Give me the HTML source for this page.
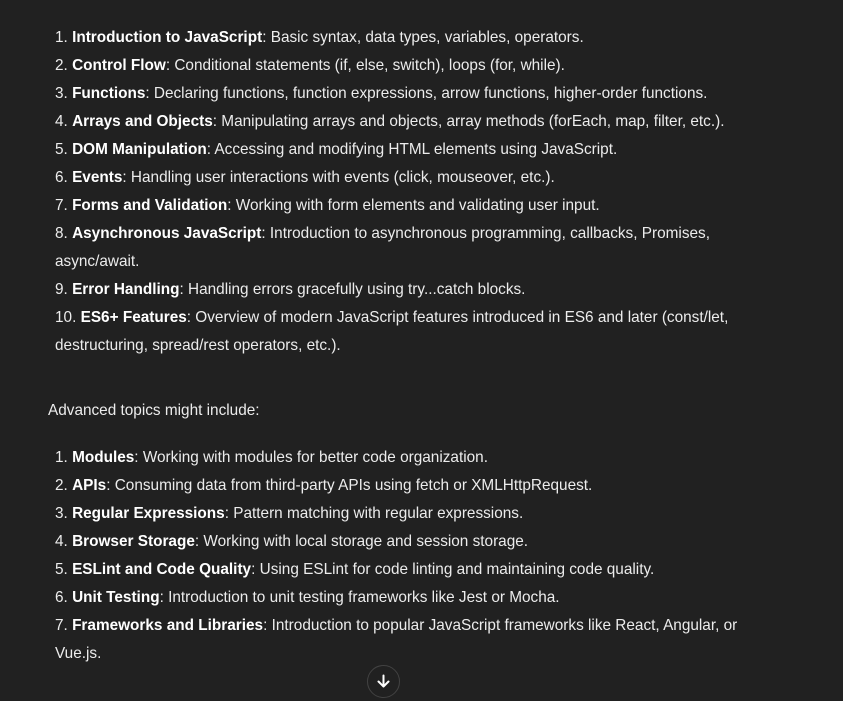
<!DOCTYPE html>
<html><head><style>
html,body{margin:0;padding:0;background:#212121;width:843px;height:701px;overflow:hidden}
body{font-family:"Liberation Sans",sans-serif;font-size:15.35px;color:#ececec;position:relative}
.l{position:absolute;left:55px;height:28px;line-height:28px;white-space:nowrap}
b{font-weight:bold;color:#fff}
.c{position:absolute;left:367px;top:665px;width:31px;height:31px;border:1px solid #424242;border-radius:50%;background:#212121}
</style></head><body>
<div class="l" style="top:24px">1. <b>Introduction to JavaScript</b>: Basic syntax, data types, variables, operators.</div>
<div class="l" style="top:52px">2. <b>Control Flow</b>: Conditional statements (if, else, switch), loops (for, while).</div>
<div class="l" style="top:80px">3. <b>Functions</b>: Declaring functions, function expressions, arrow functions, higher-order functions.</div>
<div class="l" style="top:108px">4. <b>Arrays and Objects</b>: Manipulating arrays and objects, array methods (forEach, map, filter, etc.).</div>
<div class="l" style="top:136px">5. <b>DOM Manipulation</b>: Accessing and modifying HTML elements using JavaScript.</div>
<div class="l" style="top:164px">6. <b>Events</b>: Handling user interactions with events (click, mouseover, etc.).</div>
<div class="l" style="top:192px">7. <b>Forms and Validation</b>: Working with form elements and validating user input.</div>
<div class="l" style="top:220px">8. <b>Asynchronous JavaScript</b>: Introduction to asynchronous programming, callbacks, Promises,</div>
<div class="l" style="top:248px">async/await.</div>
<div class="l" style="top:276px">9. <b>Error Handling</b>: Handling errors gracefully using try...catch blocks.</div>
<div class="l" style="top:304px">10. <b>ES6+ Features</b>: Overview of modern JavaScript features introduced in ES6 and later (const/let,</div>
<div class="l" style="top:332px">destructuring, spread/rest operators, etc.).</div>
<div class="l" style="top:397px;left:48px">Advanced topics might include:</div>
<div class="l" style="top:444px">1. <b>Modules</b>: Working with modules for better code organization.</div>
<div class="l" style="top:472px">2. <b>APIs</b>: Consuming data from third-party APIs using fetch or XMLHttpRequest.</div>
<div class="l" style="top:500px">3. <b>Regular Expressions</b>: Pattern matching with regular expressions.</div>
<div class="l" style="top:528px">4. <b>Browser Storage</b>: Working with local storage and session storage.</div>
<div class="l" style="top:556px">5. <b>ESLint and Code Quality</b>: Using ESLint for code linting and maintaining code quality.</div>
<div class="l" style="top:584px">6. <b>Unit Testing</b>: Introduction to unit testing frameworks like Jest or Mocha.</div>
<div class="l" style="top:612px">7. <b>Frameworks and Libraries</b>: Introduction to popular JavaScript frameworks like React, Angular, or</div>
<div class="l" style="top:640px">Vue.js.</div>
<div class="c"><svg width="31" height="31" viewBox="0 0 31 31"><path d="M15.5 9.5v11M10.5 15.5l5 5 5-5" fill="none" stroke="#fff" stroke-width="2" stroke-linecap="round" stroke-linejoin="round"/></svg></div>
</body></html>
